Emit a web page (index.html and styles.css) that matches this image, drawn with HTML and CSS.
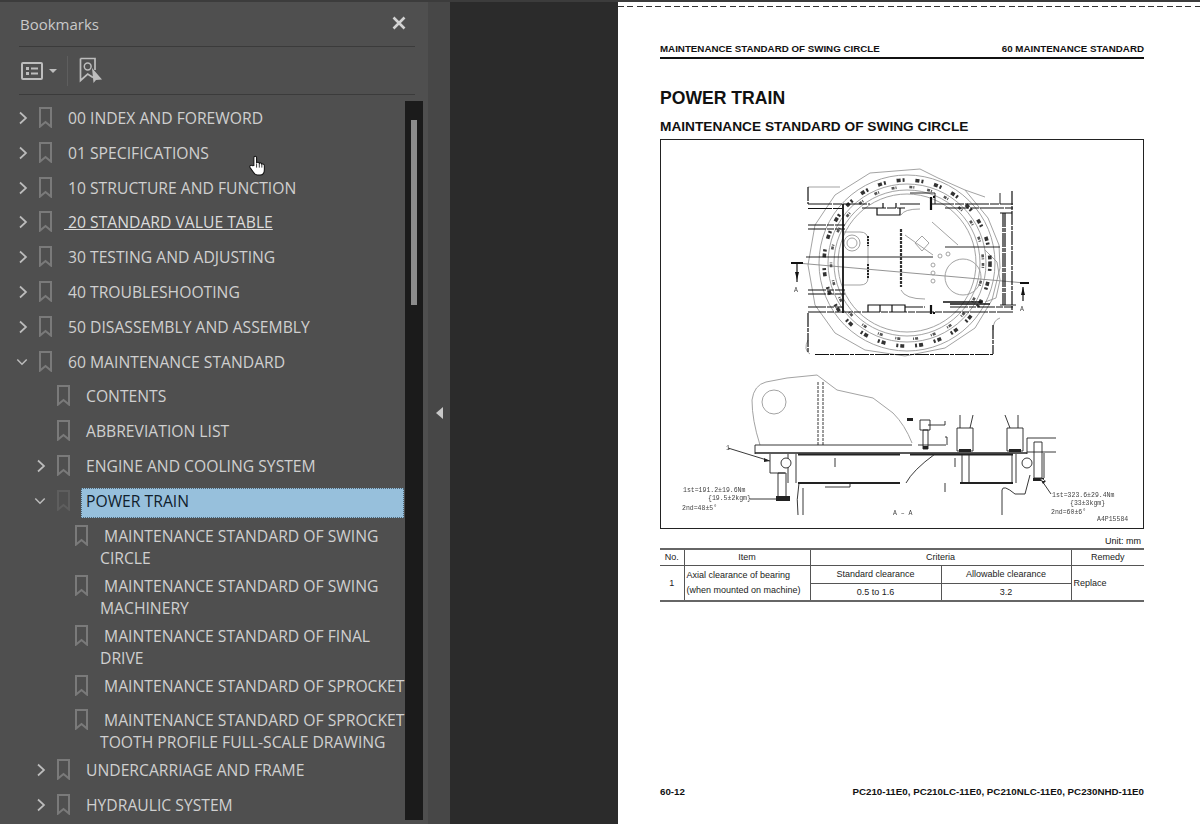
FILE: index.html
```html
<!DOCTYPE html>
<html lang="en">
<head>
<meta charset="utf-8">
<title>Bookmarks</title>
<link rel="stylesheet" href="styles.css">
</head>
<body>
<svg class="defs" width="0" height="0" aria-hidden="true">
  <symbol id="bm" viewBox="0 0 13 21"><path d="M1 1H12V19.600L6.500 15 1 19.600Z" fill="none" stroke="currentColor" stroke-width="2"/></symbol>
  <symbol id="cr" viewBox="0 0 12 14"><path d="M3 1.500L9 7 3 12.500" fill="none" stroke="currentColor" stroke-width="1.700"/></symbol>
  <symbol id="cd" viewBox="0 0 14 12"><path d="M1.500 3L7 8.500 12.500 3" fill="none" stroke="currentColor" stroke-width="1.700"/></symbol>
</svg>
<aside class="panel">
  <header class="panel-head">
    <span class="panel-title">Bookmarks</span>
    <svg class="close" viewBox="0 0 14 14"><path d="M1.500 1.500L12.500 12.500M12.500 1.500L1.500 12.500" stroke="currentColor" stroke-width="2.600" fill="none"/></svg>
  </header>
  <div class="toolbar">
    <svg class="tool-list" viewBox="0 0 22 20"><rect x="1" y="2" width="20" height="16" rx="1" fill="none" stroke="currentColor" stroke-width="2"/><rect x="5" y="6" width="3" height="3" fill="currentColor"/><rect x="5" y="11" width="3" height="3" fill="currentColor"/><path d="M10 7.500H17M10 12.500H17" stroke="currentColor" stroke-width="2"/></svg>
    <span class="caret"></span>
    <span class="tool-sep"></span>
    <svg class="tool-bm" viewBox="0 0 24 26"><path d="M1.500 1.500H16V13M14 20.500L8.700 17 1.500 23.500V1.500" fill="none" stroke="currentColor" stroke-width="1.700"/><circle cx="8.700" cy="9.500" r="3.400" fill="none" stroke="currentColor" stroke-width="1.500"/><path d="M13 11L23 22.500 17 23 14.500 26Z" fill="currentColor"/></svg>
  </div>
  <div class="tree-wrap">
    <ul class="tree">
      <li class="row"><svg class="chev"><use href="#cr"/></svg><svg class="bm"><use href="#bm"/></svg><span class="label">00 INDEX AND FOREWORD</span></li>
      <li class="row"><svg class="chev"><use href="#cr"/></svg><svg class="bm"><use href="#bm"/></svg><span class="label">01 SPECIFICATIONS</span></li>
      <li class="row"><svg class="chev"><use href="#cr"/></svg><svg class="bm"><use href="#bm"/></svg><span class="label">10 STRUCTURE AND FUNCTION</span></li>
      <li class="row"><svg class="chev"><use href="#cr"/></svg><svg class="bm"><use href="#bm"/></svg><span class="label hover"><u>&nbsp;20 STANDARD VALUE TABLE</u></span></li>
      <li class="row"><svg class="chev"><use href="#cr"/></svg><svg class="bm"><use href="#bm"/></svg><span class="label">30 TESTING AND ADJUSTING</span></li>
      <li class="row"><svg class="chev"><use href="#cr"/></svg><svg class="bm"><use href="#bm"/></svg><span class="label">40 TROUBLESHOOTING</span></li>
      <li class="row"><svg class="chev"><use href="#cr"/></svg><svg class="bm"><use href="#bm"/></svg><span class="label">50 DISASSEMBLY AND ASSEMBLY</span></li>
      <li class="row"><svg class="chev down"><use href="#cd"/></svg><svg class="bm"><use href="#bm"/></svg><span class="label">60 MAINTENANCE STANDARD</span></li>
      <li class="row l1"><span class="chev"></span><svg class="bm"><use href="#bm"/></svg><span class="label">CONTENTS</span></li>
      <li class="row l1"><span class="chev"></span><svg class="bm"><use href="#bm"/></svg><span class="label">ABBREVIATION LIST</span></li>
      <li class="row l1"><svg class="chev"><use href="#cr"/></svg><svg class="bm"><use href="#bm"/></svg><span class="label">ENGINE AND COOLING SYSTEM</span></li>
      <li class="row l1 selected"><svg class="chev down"><use href="#cd"/></svg><svg class="bm"><use href="#bm"/></svg><span class="label">POWER TRAIN</span></li>
      <li class="row l2"><svg class="bm"><use href="#bm"/></svg><span class="label">&nbsp;MAINTENANCE STANDARD OF SWING CIRCLE</span></li>
      <li class="row l2"><svg class="bm"><use href="#bm"/></svg><span class="label">&nbsp;MAINTENANCE STANDARD OF SWING MACHINERY</span></li>
      <li class="row l2"><svg class="bm"><use href="#bm"/></svg><span class="label">&nbsp;MAINTENANCE STANDARD OF FINAL DRIVE</span></li>
      <li class="row l2"><svg class="bm"><use href="#bm"/></svg><span class="label">&nbsp;MAINTENANCE STANDARD OF SPROCKET</span></li>
      <li class="row l2"><svg class="bm"><use href="#bm"/></svg><span class="label">&nbsp;MAINTENANCE STANDARD OF SPROCKET TOOTH PROFILE FULL-SCALE DRAWING</span></li>
      <li class="row l1"><svg class="chev"><use href="#cr"/></svg><svg class="bm"><use href="#bm"/></svg><span class="label">UNDERCARRIAGE AND FRAME</span></li>
      <li class="row l1"><svg class="chev"><use href="#cr"/></svg><svg class="bm"><use href="#bm"/></svg><span class="label">HYDRAULIC SYSTEM</span></li>
    </ul>
    <div class="track"><div class="thumb"></div></div>
  </div>
  <svg class="hand" viewBox="0 0 16 20"><path d="M5 10V2.600C5 .8 7.600 .8 7.600 2.600V7.500C8 6.600 10 6.600 10.200 7.900 10.800 7.200 12.400 7.400 12.600 8.800 13.200 8.200 15 8.600 15 10.200V14C15 17 13.400 19 11 19H8.400C6.600 19 5.600 18 4.600 16.400L1.400 12C.4 10.400 2.400 9 3.600 10.200Z" fill="#fff" stroke="#111" stroke-width="1"/><path d="M7.600 8V12M10.200 8V12M12.600 9V12" stroke="#111" stroke-width=".8"/></svg>
</aside>
<div class="splitter"><span class="collapse"></span></div>
<main class="viewer">
  <article class="page">
    <div class="cut"></div>
    <div class="run-head"><span>MAINTENANCE STANDARD OF SWING CIRCLE</span><span>60 MAINTENANCE STANDARD</span></div>
    <h1 class="h1">POWER TRAIN</h1>
    <h2 class="h2">MAINTENANCE STANDARD OF SWING CIRCLE</h2>
    <figure class="figure">
      <svg class="drawing" viewBox="661 140 482 388">
        <g fill="none" stroke="#999" stroke-width=".9">
          <path d="M870 173L920 169 938 178 965 190 988 218 999 245 1000 268 992 300 975 328 945 348 905 356 865 350 835 333 815 305 808 265 815 225 835 195Z"/>
          <circle cx="907" cy="263" r="88"/><circle cx="907" cy="263" r="79"/><circle cx="907" cy="263" r="73"/><circle cx="907" cy="263" r="69"/>
          <path d="M797 263L1025 283" stroke="#888"/>
          <path d="M901 215Q904 209 920 209M901 290Q905 299 925 299M932 222L958 245M905 235L933 255"/>
          <circle cx="963" cy="277" r="18"/><circle cx="852" cy="243" r="8"/><circle cx="852" cy="243" r="5"/>
          <path d="M915 243L922 236 929 243 922 251Z"/>
          <path d="M843 232H860Q868 232 868 240V278Q868 285 860 285H843"/>
          <circle cx="933" cy="265" r="2"/><circle cx="933" cy="273" r="2"/><circle cx="933" cy="281" r="2"/><circle cx="940" cy="256" r="2"/><circle cx="948" cy="254" r="2"/>
          <path d="M985 250L997 262 1000 280 996 298 985 302"/>
          <path d="M808 187H840M965 190L985 197M810 354Q803 350 808 340M1000 318Q993 320 993 330"/>
        </g>
        <circle cx="907" cy="263" r="83" fill="none" stroke="#333" stroke-width="3.600" stroke-dasharray="4 2 2 11"/>
        <circle cx="907" cy="263" r="76" fill="none" stroke="#555" stroke-width="2.600" stroke-dasharray="3 1 1 13"/>
        <g fill="none" stroke="#111" stroke-width="1.200">
          <path d="M808 204H870M900 204H920M930 204H1013M808 208.500H843M862 208H905M945 208H1013" stroke-dasharray="24 1 9 1"/>
          <path d="M808 307H843M905 307H925M950 307H1013M808 312H1013M808 225H845M808 229H845M808 290H845M808 294H845" stroke-dasharray="18 1 7 1"/>
          <path d="M808 187V204M808 313V353M815 354.500H993M993 325V354M1012 191V310M1005 213V305M1003 213V305M1000 213H1012" stroke-dasharray="14 1 4 1"/>
          <path d="M843 204V313" stroke-width="1.800"/>
          <path d="M877 208V215H900V208M883 203V208M896 203V208M868 312V305H905V312M880 305V312M892 305V312"/>
          <path d="M806 257H933" stroke-width=".9"/>
          <path d="M945 247H1000M910 193H935V204M1000 193V204M1000 305H1016" stroke-width=".9"/>
          <path d="M901 229V287" stroke="#333" stroke-width="2.200" stroke-dasharray="3 1"/>
          <path d="M868 236V246M868 264V278" stroke-width="1.800" stroke-dasharray="2 1"/>
          <path d="M943 302H983M950 304H990" stroke-width="1.600"/>
          <path d="M931 197V210M931 305V314M933 197H935M933 313H935" stroke-width="2.200"/>
          <path d="M791 263H803M1020 283H1029" stroke-width="1.800"/>
          <path d="M797 263V282M1023 287V301"/>
        </g>
        <path d="M795 272H799L797 280ZM1021 295H1025L1023 287Z" fill="#111"/>
        <text x="794" y="292" class="dt">A</text><text x="1020" y="311" class="dt">A</text>

        <g fill="none" stroke="#999" stroke-width=".9">
          <path d="M760 445Q752 420 752 400 754 385 766 382L787 378 817 375 837 390 873 398 893 413Q905 425 912 443"/>
          <circle cx="774" cy="402" r="12"/>
        </g>
        <g fill="none" stroke="#222" stroke-width=".9">
          <path d="M818 382V445M823 382V445" stroke-dasharray="3 1"/>
          <path d="M755 445H912M755 445V454M918 445H946M1027 445V454"/>
          <path d="M755 453H1027" stroke-width="1.300"/>
          <path d="M798 454.500H900M910 454.500H1013" stroke-width="2.200"/>
          <path d="M798 483H900M960 483H1013" stroke-width="1.800"/>
          <path d="M788 454V483M796 454V483M962 454V483M969 454V483M1012 454V483M1016 454V483M935 454Q913 470 906 483" />
          <path d="M770 454V473H785"/>
          <circle cx="786" cy="463" r="5" fill="#fff"/><circle cx="1027" cy="463" r="5" fill="#fff"/>
          <path d="M778 473H786V497H778Z"/>
          <path d="M1034 442H1042V478H1034ZM1044 453V478"/>
          <path d="M920 420H930V430H920ZM923 430H928V449H923ZM928 425H945V421M945 437H947V445"/>
          <path d="M957 428H973V451H957ZM960 415V428M973 415L970 428M1007 428H1023V451H1007ZM1005 415L1010 428M1018 415V428"/>
          <path d="M1027 445V438H1056M1027 452H1056"/>
          <path d="M803 488V515M1002 515V490Q1003 484 1015 494H1025L1030 475M799 483Q796 500 798 515"/>
          <path d="M728 448L770 461M750 499H776M1051 494L1040 478"/>
          <path d="M835 458V467M955 458V467M850 483V487H825M945 483V492"/>
        </g>
        <path d="M770 461L764 458 764 462ZM1040 478L1043 484 1046 481ZM776 496H790V501H776ZM1033 478H1044V481H1033ZM907 418H913V421H907ZM959 449H971V452H959ZM1009 449H1021V452H1009ZM923 446H928V449H923Z" fill="#222"/>
        <text x="683" y="492" class="dt">1st=191.2±19.6Nm</text>
        <text x="708" y="500" class="dt">{19.5±2kgm}</text>
        <text x="682" y="510" class="dt">2nd=48±5°</text>
        <text x="726" y="450" class="dt">1</text>
        <text x="1052" y="497" class="dt">1st=323.6±29.4Nm</text>
        <text x="1070" y="505" class="dt">{33±3kgm}</text>
        <text x="1051" y="514" class="dt">2nd=60±6°</text>
        <text x="893" y="515" class="dt">A – A</text>
        <text x="1097" y="521" class="dt">A4P15584</text>
      </svg>
    </figure>
    <div class="unit">Unit: mm</div>
    <table class="spec">
      <colgroup><col class="c-no"><col class="c-item"><col class="c-a"><col class="c-b"><col class="c-rem"></colgroup>
      <tr class="thead"><td>No.</td><td>Item</td><td colspan="2">Criteria</td><td>Remedy</td></tr>
      <tr class="r1"><td rowspan="2">1</td><td rowspan="2" class="item">Axial clearance of bearing<br>(when mounted on machine)</td><td>Standard clearance</td><td>Allowable clearance</td><td rowspan="2" class="rem">Replace</td></tr>
      <tr class="r2"><td>0.5 to 1.6</td><td>3.2</td></tr>
    </table>
    <div class="run-foot"><span>60-12</span><span>PC210-11E0, PC210LC-11E0, PC210NLC-11E0, PC230NHD-11E0</span></div>
  </article>
</main>
</body>
</html>
```

FILE: styles.css
```css
* { box-sizing: border-box; }
html, body { margin: 0; padding: 0; }
body {
  display: flex;
  width: 1200px;
  height: 824px;
  overflow: hidden;
  background: #2b2b2b;
  font-family: "Open Sans", "Liberation Sans", sans-serif;
}
.defs { position: absolute; }

/* side panel */
.panel {
  position: relative;
  flex: 0 0 428px;
  height: 824px;
  padding-left: 3px;
  background: #4f4f4f;
  border-top: 2px solid #3c3c3c;
  overflow: hidden;
}
.panel-head {
  display: flex;
  align-items: center;
  justify-content: space-between;
  height: 45px;
  margin: 0 13px 0 16px;
  padding: 0 9px 0 1px;
  border-bottom: 1px solid #3b3b3b;
  color: #cfcfcf;
}
.panel-title { font-size: 15px; color: #c9c9c9; }
.close { width: 14px; height: 14px; color: #d2d2d2; margin-bottom: 3px; }
.toolbar {
  display: flex;
  align-items: center;
  height: 48px;
  margin: 0 13px 0 16px;
  padding-left: 2px;
  border-bottom: 1px solid #3b3b3b;
  color: #bdbdbd;
}
.tool-list { width: 22px; height: 20px; }
.caret {
  width: 0;
  height: 0;
  margin-left: 6px;
  border: 4px solid transparent;
  border-top-color: #bdbdbd;
  border-bottom-width: 0;
}
.tool-sep { width: 1px; height: 30px; margin: 0 11px 0 10px; background: #5e5e5e; }
.tool-bm { width: 24px; height: 26px; margin-bottom: 2px; }

.tree-wrap { display: flex; height: 729px; }
.tree {
  flex: 0 0 402px;
  width: 402px;
  margin: 0;
  padding: 6px 0 0;
  list-style: none;
  overflow: hidden;
  font-size: 15.700px;
  line-height: 22px;
  color: #d0d0d0;
}
.row {
  display: flex;
  align-items: flex-start;
  min-height: 34.800px;
  padding-left: 14px;
}
.row.l1 { padding-left: 32px; }
.row.l2 { padding-left: 72px; }
.chev {
  flex: 0 0 12px;
  width: 12px;
  height: 14px;
  margin: 10px 10px 0 0;
  color: #bcbcbc;
}
.chev.down { margin-left: -1px; margin-right: 11px; width: 14px; flex-basis: 12px; height: 12px; margin-top: 11.500px; }
.bm {
  flex: 0 0 13px;
  width: 13px;
  height: 21px;
  margin-top: 6px;
  margin-right: 16px;
  color: #7a7a7a;
}
.row.l2 .bm { margin-right: 12px; }
.label { flex: 1; padding-top: 6px; }
.hover { color: #dcdcdc; }
.hover u { margin-left: -4px; }
.selected .bm { color: #5e5e5e; }
.selected .label {
  flex: 1;
  height: 30px;
  margin: 4.200px 1px 0 -5px;
  padding: 1px 0 0 4px;
  background: #97c0dc;
  border: 1px dotted #4d6576;
  color: #10202c;
}
.track { flex: 0 0 18px; height: 719px; margin-top: 6px; padding: 19px 6px 0; background: #1b1b1b; }
.thumb { height: 185px; background: #8c8c8c; }
.hand { position: absolute; left: 248px; top: 153px; width: 18px; height: 21px; }

/* splitter */
.splitter {
  flex: 0 0 22px;
  display: flex;
  align-items: center;
  justify-content: center;
  background: #474747;
  border-top: 2px solid #3c3c3c;
}
.collapse {
  width: 0;
  height: 0;
  border: 6px solid transparent;
  border-right: 7px solid #c8c8c8;
  border-left-width: 0;
}

/* viewer */
.viewer { flex: 1; display: flex; padding-left: 168px; background: #2b2b2b; border-top: 2px solid #3c3c3c; }
.page {
  display: flex;
  flex-direction: column;
  width: 582px;
  height: 822px;
  padding: 4px 56px 0 42px;
  background: #fff;
  color: #111;
  font-family: "Liberation Sans", Arial, sans-serif;
  overflow: hidden;
}
.cut {
  height: 1px;
  margin: 0 -56px 0 -42px;
  background: repeating-linear-gradient(90deg, #333 0 6px, transparent 6px 9.300px);
}
.run-head, .run-foot {
  display: flex;
  justify-content: space-between;
  font-size: 9.750px;
  font-weight: 700;
  line-height: 11px;
}
.run-head { margin-top: 36px; padding-bottom: 3px; border-bottom: 2px solid #111; }
.h1 { margin: 28px 0 0; font-size: 17.600px; line-height: 22px; font-weight: 700; }
.h2 { margin: 10px 0 0; font-size: 13.700px; line-height: 15px; font-weight: 700; }
.figure { height: 390px; margin: 5px 0 0; border: 1px solid #222; }
.drawing { display: block; width: 482px; height: 388px; filter: blur(.3px); }
.dt { font: 6.500px "Liberation Mono", monospace; fill: #444; }
.unit { margin-top: 7px; padding-right: 3px; text-align: right; font-size: 9px; line-height: 10px; }
.spec {
  width: 484px;
  margin-top: 2px;
  border-collapse: collapse;
  table-layout: fixed;
  font-size: 9px;
  line-height: 15px;
  color: #222;
  border-top: 2px solid #666;
  border-bottom: 2px solid #666;
}
.spec td { padding: 0; border: 1px solid #555; text-align: center; }
.spec .r1 td, .spec .r2 td { padding-top: 1px; }
.spec tr td:first-child { border-left: 0; }
.spec tr td.rem, .spec .thead td:last-child { border-right: 0; }
.c-no { width: 24px; }
.c-item { width: 126px; }
.c-a { width: 131px; }
.c-b { width: 130px; }
.c-rem { width: 73px; }
.thead td { height: 16px; }
.r1 td, .r2 td { height: 17.500px; }
.spec td.item, .spec td.rem { text-align: left; padding-left: 2px; }
.run-foot { margin-top: auto; margin-bottom: 27px; }
```
